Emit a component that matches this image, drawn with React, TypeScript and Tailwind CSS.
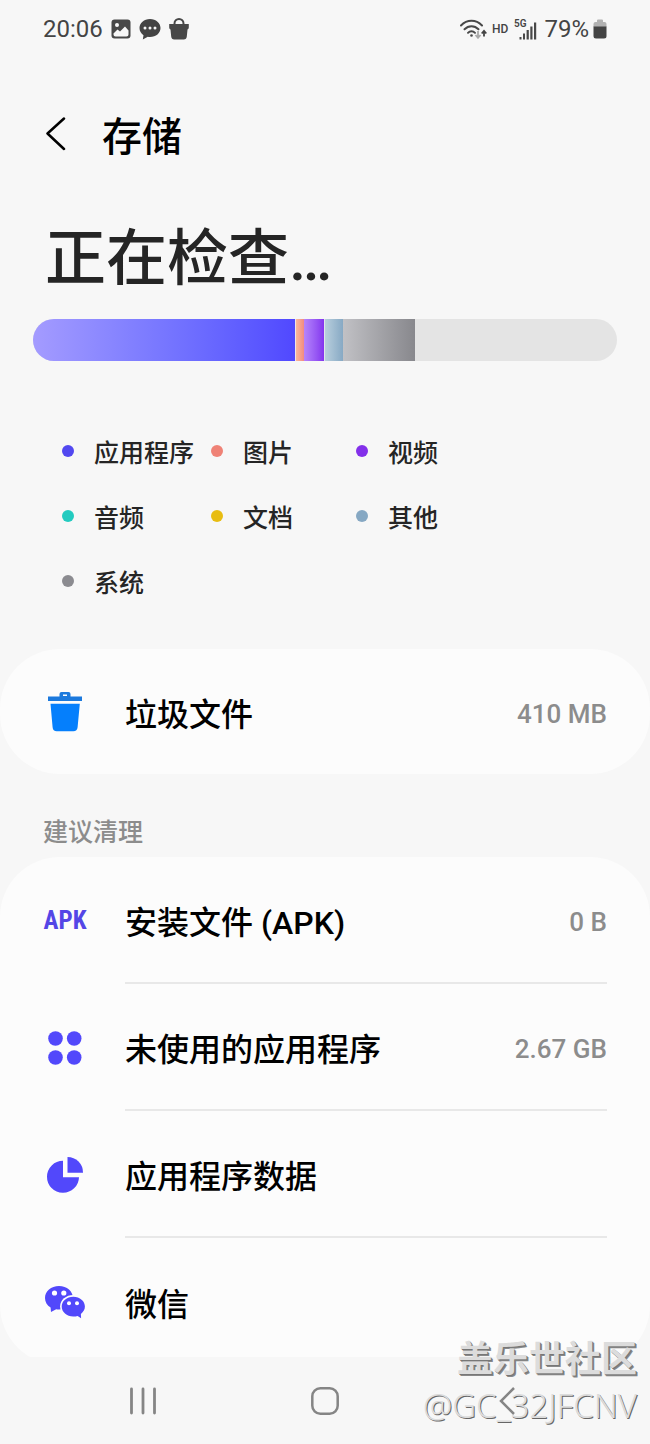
const segments = [
  { name: "应用程序", width: 262, color: "bg-linear-to-r from-[#a49bff] to-[#5148ff]" },
  { name: "图片", width: 9, color: "bg-linear-to-r from-[#f9b79c] to-[#f28b82] border-l border-[#f3e4e4]" },
  { name: "视频", width: 20, color: "bg-linear-to-r from-[#b784fb] to-[#8432ee]" },
  { name: "其他", width: 19, color: "bg-linear-to-r from-[#b9cfdd] to-[#87a9c4] border-l border-[#dfe6ea]" },
  { name: "系统", width: 72, color: "bg-linear-to-r from-[#c1c1c5] to-[#88888d]" },
]

const legend = [
  { name: "应用程序", color: "bg-[#5248f0]" },
  { name: "图片", color: "bg-[#ef8276]" },
  { name: "视频", color: "bg-[#8330ea]" },
  { name: "音频", color: "bg-[#23cbc0]" },
  { name: "文档", color: "bg-[#e8bd12]" },
  { name: "其他", color: "bg-[#86a8c3]" },
  { name: "系统", color: "bg-[#8b8b90]" },
]

const suggestions = [
  { name: "安装文件 (APK)", size: "0 B", icon: <ApkIcon /> },
  { name: "未使用的应用程序", size: "2.67 GB", icon: <AppsIcon /> },
  { name: "应用程序数据", size: "", icon: <PieIcon /> },
  { name: "微信", size: "", icon: <WeChatIcon /> },
]

function ApkIcon() {
  return (
    <span className="font-['Roboto_Condensed','Liberation_Sans_Narrow','Roboto',sans-serif] text-[25px] leading-none font-bold text-[#5446e6]">
      APK
    </span>
  )
}

function AppsIcon() {
  return (
    <svg width="34" height="34" viewBox="0 0 34 34" fill="#5248fb">
      <circle cx="7.5" cy="7.5" r="7.3" />
      <circle cx="26.2" cy="7.5" r="7.3" />
      <circle cx="7.5" cy="26.5" r="7.3" />
      <circle cx="26.2" cy="26.5" r="7.3" />
    </svg>
  )
}

function PieIcon() {
  return (
    <svg width="38" height="38" viewBox="0 0 38 38" fill="#5248fb">
      <path d="M17 4.800A16 16 0 1 0 33 21.200H17z" />
      <path d="M21.500 1A15.500 15.500 0 0 1 37 16.700H21.500z" />
    </svg>
  )
}

function WeChatIcon() {
  return (
    <svg width="42" height="34" viewBox="0 0 42 34">
      <path d="M15 1C7 1 1 6.200 1 13c0 4 2 7.300 5.600 9.500L7 27l5.200-2.700c1 .2 1.800.2 2.800.2 8 0 14-5 14-11.500S23 1 15 1z" fill="#5248fb" />
      <ellipse cx="29.300" cy="21.500" rx="13.200" ry="11.600" fill="#fcfcfc" />
      <path d="M29.300 11.700c-6.600 0-11.600 4.400-11.600 9.900s5 10 11.600 10c1.600 0 3-.2 4.300-.7l3.500 2.300-.2-4.300c2.500-1.800 4-4.300 4-7.300 0-5.500-5-9.900-11.600-9.900z" fill="#5248fb" />
      <circle cx="10.500" cy="8" r="2.600" fill="#fff" />
      <circle cx="19.800" cy="8" r="2.600" fill="#fff" />
      <circle cx="25" cy="18.300" r="2" fill="#fff" />
      <circle cx="33" cy="18.300" r="2" fill="#fff" />
    </svg>
  )
}

function TrashIcon() {
  return (
    <svg width="36" height="42" viewBox="0 0 36 42">
      <path d="M1 5.500h11.500V3q0-2 2-2h7q2 0 2 2v2.500H35V10H1zM16 3.500v1.500h4V3.500z" fill="#1b79dd" fillRule="evenodd" />
      <path d="M3.500 12.800h29.300l-2.200 23.500q-.4 4-4.300 4H9.800q-3.900 0-4.200-4z" fill="#057ffc" />
    </svg>
  )
}

function StatusBar() {
  return (
    <div className="flex h-[58px] items-center justify-between px-[43px] font-normal text-[#444]">
      <div className="flex items-center gap-2">
        <span className="font-['Roboto'] text-[24px]">20:06</span>
        <svg width="20" height="20" viewBox="0 0 20 20">
          <rect x="0.500" y="0.500" width="19" height="19" rx="3" fill="#484848" />
          <circle cx="6" cy="6" r="2" fill="#f7f7f7" />
          <path d="M2.500 14.500l4-4 2.500 2 5-5 3.500 4v4q0 2-2 2h-11q-2 0-2-2z" fill="#f7f7f7" />
        </svg>
        <svg width="22" height="22" viewBox="0 0 22 22" fill="#444">
          <path d="M11 1C5 1 .5 5 .5 10c0 3 1.500 5.500 4 7.200L3.800 21.500l5-2.700c.7.1 1.400.2 2.200.2 6 0 10.500-4 10.500-9S17 1 11 1z" />
          <g fill="#f7f7f7">
            <circle cx="6" cy="10" r="1.500" />
            <circle cx="11" cy="10" r="1.500" />
            <circle cx="16" cy="10" r="1.500" />
          </g>
        </svg>
        <svg width="20" height="22" viewBox="0 0 20 22">
          <path d="M5.500 8V5.500a4.500 4.500 0 0 1 9 0V8" fill="none" stroke="#484848" strokeWidth="2" />
          <path d="M.2 6h19.600v3.500q0 1.500-1.300 2l-.7 7q-.3 3-3 3H5.200q-2.700 0-3-3l-.7-7Q.2 11 .2 9.500z" fill="#484848" />
        </svg>
      </div>
      <div className="flex items-center font-['Roboto']">
        <svg width="27" height="20" viewBox="0 0 27 20" fill="none">
          <g stroke="#484848" strokeWidth="2" strokeLinecap="round">
            <path d="M1 6.500c6-6.200 15-6.200 21 0" />
            <path d="M4.500 10.300c4-4.200 10-4.200 14 0" />
            <path d="M8 13.800c2-2.200 5-2.200 7 0" />
          </g>
          <circle cx="11.500" cy="16.500" r="1.300" fill="#484848" />
          <path d="M18 12v6M15.500 16l2.500 2.800 2.500-2.800" stroke="#aaa" strokeWidth="1.800" />
          <path d="M24 17.500v-5M21.700 14.500l2.300-2.600 2.300 2.600" stroke="#444" strokeWidth="1.800" />
        </svg>
        <span className="ml-[5px] text-[12px] font-medium">HD</span>
        <svg className="ml-[6px]" width="24" height="22" viewBox="0 0 24 22">
          <text x="0" y="9" fontSize="10" fontWeight="600" fill="#444">5G</text>
          <g fill="#484848">
            <rect x="5.500" y="19" width="2" height="2.500" />
            <rect x="9" y="15.500" width="2" height="6" />
            <rect x="12.600" y="12" width="2.200" height="9.500" />
            <rect x="16.300" y="8.500" width="2.200" height="13" />
            <rect x="20" y="4.500" width="2.200" height="17" />
          </g>
        </svg>
        <span className="ml-[6px] text-[24px]">79%</span>
        <svg className="ml-1" width="14" height="20" viewBox="0 0 14 20">
          <path d="M4 1.500Q4 .5 5 .5h4q1 0 1 1V3h1.500q2 0 2 2v3H.5V5q0-2 2-2H4z" fill="#b2b2b2" />
          <path d="M.5 7.500h13V17q0 2.500-2.500 2.500H3Q.5 19.500.5 17z" fill="#444" />
        </svg>
      </div>
    </div>
  )
}

export default function App() {
  return (
    <div className="relative min-h-screen overflow-hidden bg-[#f7f7f7] font-['Roboto','Noto_Sans_CJK_SC',sans-serif] font-medium text-black">
      <StatusBar />

      <header className="flex h-[152px] items-center gap-[36px] pl-[45px]">
        <button aria-label="返回">
          <svg width="21" height="34" viewBox="0 0 21 34" fill="none" stroke="#000" strokeWidth="2.500" strokeLinecap="round" strokeLinejoin="round">
            <path d="M19 1.500L2.500 16.500L19 32" />
          </svg>
        </button>
        <h1 className="pt-2 text-[40px] leading-[48px]">存储</h1>
      </header>

      <section className="pt-[7px]">
        <h2 className="pl-[45px] text-[61px] leading-[84px] text-[#252525]">正在检查…</h2>
        <div className="mx-[33px] mt-[18px] flex h-[42px] overflow-hidden rounded-full bg-[#e4e4e4]">
          {segments.map((segment) => (
            <div key={segment.name} className={segment.color} style={{ width: `${(segment.width / 584) * 100}%` }} />
          ))}
        </div>
        <ul className="mt-[57px] grid grid-cols-[149px_145px_auto] pl-[62px] text-[25px] text-[#252525]">
          {legend.map((item) => (
            <li key={item.name} className="flex h-[65px] items-center gap-5 whitespace-nowrap">
              <span className={`size-3 shrink-0 rounded-full ${item.color}`} />
              <span className="pt-1.5">{item.name}</span>
            </li>
          ))}
        </ul>
      </section>

      <button className="mt-[36px] flex h-[125px] w-full items-center rounded-[60px] bg-[#fcfcfc] px-[43px] text-left">
        <span className="flex w-[44px] justify-center"><TrashIcon /></span>
        <span className="ml-[38px] flex-1 pt-1.5 text-[32px]">垃圾文件</span>
        <span className="pt-1.5 text-[26px] text-[#8c8c8c]">410 MB</span>
      </button>

      <h3 className="flex h-[83px] items-end px-[43px] pb-1.5 text-[25px] text-[#8c8c8c]">建议清理</h3>

      <ul className="rounded-[60px] bg-[#fcfcfc] px-[43px]">
        {suggestions.map((item, index) => (
          <li key={item.name}>
            <button className="flex h-[127px] w-full items-center text-left">
              <span className="flex w-[44px] justify-center">{item.icon}</span>
              <span className={`ml-[38px] flex h-full flex-1 items-center justify-between pt-1.5 ${index < suggestions.length - 1 ? "border-b-2 border-[#e8e8e8]" : ""}`}>
                <span className="text-[32px]">{item.name}</span>
                <span className="text-[26px] text-[#8c8c8c]">{item.size}</span>
              </span>
            </button>
          </li>
        ))}
      </ul>

      {/* navigation bar covers the end of the scrolled list */}
      <nav className="relative -mt-2 grid h-[87px] grid-cols-3 items-center justify-items-center bg-[#f7f7f7] px-[52px]">
        <button aria-label="最近">
          <svg width="28" height="28" viewBox="0 0 28 28" stroke="#858585" strokeWidth="2.800" strokeLinecap="round">
            <path d="M2.500 2v24M14 2v24M25.500 2v24" />
          </svg>
        </button>
        <button aria-label="主页">
          <svg width="28" height="28" viewBox="0 0 28 28" fill="none" stroke="#858585" strokeWidth="2.500">
            <rect x="1.300" y="1.300" width="25.400" height="25.400" rx="8" />
          </svg>
        </button>
        <button aria-label="后退">
          <svg width="16" height="28" viewBox="0 0 16 28" fill="none" stroke="#858585" strokeWidth="2.500">
            <path d="M15 1L2 14l13 13" />
          </svg>
        </button>
      </nav>

      <div className="pointer-events-none absolute right-[13px] bottom-[16px] text-right text-[#dcdcdc]">
        <p className="text-[36px] leading-[48px] font-bold [text-shadow:1px_1px_0_#777,2px_2px_0_#888]">盖乐世社区</p>
        <p className="font-['Noto_Sans',sans-serif] text-[33px] leading-[44px] font-light [text-shadow:1px_1px_0_#666]">@GC_32JFCNV</p>
      </div>
    </div>
  )
}
